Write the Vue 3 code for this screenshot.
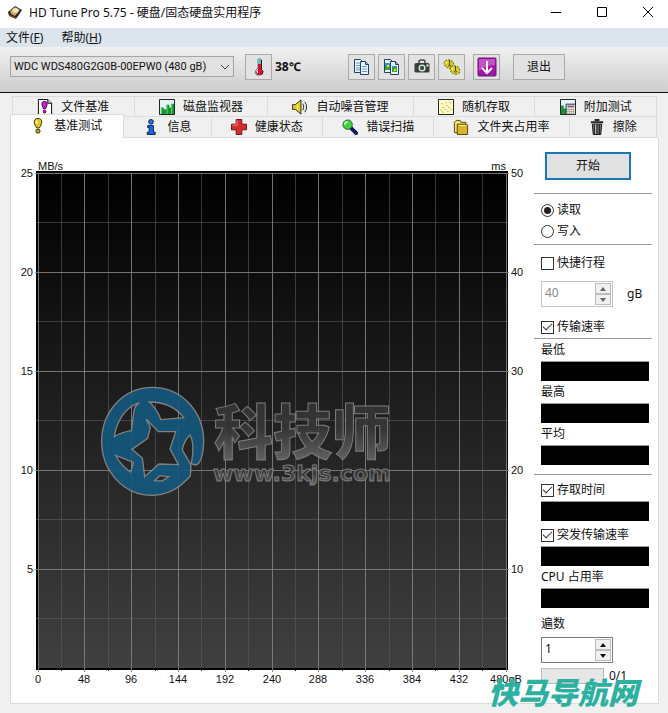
<script setup>
import { ref } from 'vue'

const drive = ref('WDC WDS480G2G0B-00EPW0 (480 gB)')
const mode = ref('read')
const shortStroke = ref(false)
const strokeSize = ref(40)
const transfer = ref(true)
const access = ref(true)
const burst = ref(true)
const passes = ref(1)

const backTabs = [
  { label: '文件基准', icon: 'filebench' },
  { label: '磁盘监视器', icon: 'monitor' },
  { label: '自动噪音管理', icon: 'sound' },
  { label: '随机存取', icon: 'random' },
  { label: '附加测试', icon: 'extra' },
]
const frontTabs = [
  { label: '基准测试', icon: 'bench', active: true },
  { label: '信息', icon: 'info' },
  { label: '健康状态', icon: 'health' },
  { label: '错误扫描', icon: 'scan' },
  { label: '文件夹占用率', icon: 'folder' },
  { label: '擦除', icon: 'erase' },
]
const tabRows = [backTabs, frontTabs]

const left = 38
const top = 173
const stepX = 46.8
const stepY = 99
const xTicks = Array.from({ length: 11 }, (_, i) => ({
  x: Math.floor(left + i * stepX),
  label: i === 10 ? '480gB' : String(i * 48),
}))
const xMinor = Array.from({ length: 10 }, (_, i) => Math.floor(left + (i + 0.5) * stepX))
const yTicks = Array.from({ length: 5 }, (_, i) => ({
  y: top + i * stepY,
  speed: 25 - i * 5,
  ms: 50 - i * 10,
}))
const yMinor = Array.from({ length: 5 }, (_, i) => Math.floor(top + (i + 0.5) * stepY))
</script>

<template>
  <div class="window">
    <header class="titlebar">
      <svg class="app-icon" viewBox="0 0 16 16" aria-hidden="true">
        <path d="M1 7 8 1l7 4-6 9-7-3z" fill="#2b211b" />
        <path d="M3 6 8 2l5 3-5 6-4-2z" fill="#c9a36b" />
        <ellipse cx="8.500" cy="5.500" rx="3" ry="2.500" fill="#f2dfb8" />
        <path d="m2 10 7 3 2-2" stroke="#8d5d3b" fill="none" />
      </svg>
      <h1>HD Tune Pro 5.75 - 硬盘/固态硬盘实用程序</h1>
      <div class="controls">
        <button aria-label="最小化"><svg viewBox="0 0 12 12"><path d="M1 5.500h10" /></svg></button>
        <button aria-label="最大化"><svg viewBox="0 0 12 12"><path d="M1.500.5h9v9h-9z" /></svg></button>
        <button aria-label="关闭"><svg viewBox="0 0 12 12"><path d="m1 0 10 10M11 0 1 10" /></svg></button>
      </div>
    </header>

    <nav class="menu">
      <a href="#file">文件(<u>F</u>)</a>
      <a href="#help">帮助(<u>H</u>)</a>
    </nav>

    <div class="toolbar">
      <div class="drive">
        <select v-model="drive" aria-label="硬盘">
          <option>WDC WDS480G2G0B-00EPW0 (480 gB)</option>
        </select>
        <svg class="chevron" viewBox="0 0 10 6" aria-hidden="true"><path d="m1 1 4 4 4-4" /></svg>
      </div>
      <button class="tool" aria-label="温度">
        <svg viewBox="0 0 20 20">
          <path d="M9 2h3v10l2 3-2 3H8l-2-2 1-3 2-2z" fill="#e8e8e8" stroke="#777" />
          <path d="M9 2h3v5H9z" fill="#5ac5b9" />
          <path d="M9 7h3v6l2 2-2 3H8l-1-3 2-2z" fill="#d1122a" />
          <path d="M12.500 3v9.500l1.500 2-1 3" fill="none" stroke="#400" />
          <path d="M8.500 14v2" stroke="#fff" />
        </svg>
      </button>
      <output class="temp">38℃</output>
      <div class="tools">
        <button class="tool" aria-label="复制文本">
          <svg viewBox="0 0 20 20">
            <path d="M2.500 2.500h6l2 2v11h-8z" fill="#eef6ff" stroke="#24415f" />
            <path d="M8.500 4.500h5l3 3v10h-8z" fill="#eef6ff" stroke="#24415f" />
            <path d="M13.500 4.500v3h3" fill="#9bbce0" stroke="#24415f" />
            <path d="M4 6h4M4 8.500h4M4 11h4M4 13h4M10 9.500h5M10 12h5M10 14.500h5" stroke="#5799de" />
          </svg>
        </button>
        <button class="tool" aria-label="复制图像">
          <svg viewBox="0 0 20 20">
            <path d="M2.500 2.500h6l2 2v11h-8z" fill="#eef6ff" stroke="#24415f" />
            <path d="M8.500 4.500h5l3 3v10h-8z" fill="#eef6ff" stroke="#24415f" />
            <path d="M13.500 4.500v3h3" fill="#9bbce0" stroke="#24415f" />
            <path d="M3 6h5v7H3zM10 9h5v6h-5z" fill="#3a8de0" />
            <path d="M3 9h5v4H3zM10 11l3-1 2 2v3h-5z" fill="#35a827" />
            <path d="M5 8h2v2H5zM12 12h2v2h-2z" fill="#d7e34a" />
          </svg>
        </button>
        <button class="tool" aria-label="截图">
          <svg viewBox="0 0 20 20">
            <path d="M7 6V5q0-2 2-2h2q2 0 2 2v1" fill="none" stroke="#444" stroke-width="1.500" />
            <rect x="2.500" y="6" width="15" height="9.500" rx="1.500" fill="#3c3c3c" />
            <circle cx="10" cy="11" r="3.500" fill="#dfeee3" />
            <circle cx="10" cy="11" r="2.200" fill="#2f5441" />
            <path d="M14.500 7.500h2v2h-2z" fill="#dff5df" />
          </svg>
        </button>
        <button class="tool" aria-label="选项">
          <svg viewBox="0 0 20 20">
            <g fill="#d6cb24" stroke="#77700c" stroke-dasharray="2 1">
              <ellipse cx="7" cy="7" rx="5" ry="4" transform="rotate(25 7 7)" />
              <ellipse cx="13" cy="13" rx="5" ry="4" transform="rotate(25 13 13)" />
            </g>
            <path d="M7.500 3v5M13.500 9v5" stroke="#4f4a08" />
            <path d="M6 8.500q1.500 1 3 0M12 14.500q1.500 1 3 0" fill="none" stroke="#4f4a08" />
            <path d="m4 6 1-1M10 12l1-1" stroke="#f9f4a0" stroke-width="2" />
          </svg>
        </button>
      </div>
      <button class="tool save" aria-label="保存">
        <svg viewBox="0 0 20 20">
          <rect x="1" y="1" width="18" height="18" rx="1" fill="#a014a8" stroke="#6d1478" />
          <path d="M2 2h16v6Q8 8 2 14z" fill="#c552c9" />
          <path d="M10 4v12M5 11l5 5 5-5" fill="none" stroke="#fff" stroke-width="2" />
        </svg>
      </button>
      <button class="exit">退出</button>
    </div>

    <main class="body">
      <div class="tabs" role="tablist">
        <div v-for="(row, r) in tabRows" :key="r" class="tab-row" :class="{ front: r === 1 }">
          <button
            v-for="tab in row"
            :key="tab.label"
            class="tab"
            :class="{ active: tab.active }"
            role="tab"
            :aria-selected="!!tab.active"
          >
            <svg viewBox="0 0 17 17" aria-hidden="true">
              <g v-if="tab.icon === 'filebench'">
                <path d="M1.500.5h10l4 4v12h-14z" fill="#fff" stroke="#000" />
                <path d="M11.500.5v4h4" fill="#ddd" stroke="#000" />
                <path d="M8 2.500C4.500 2.500 4.500 6 7 10.500h2c2.500-4.500 2.500-8-1-8z" fill="#c41bd0" stroke="#400045" />
                <circle cx="8" cy="13.500" r="1.500" fill="#c41bd0" stroke="#400045" />
              </g>
              <g v-else-if="tab.icon === 'monitor'">
                <path d="M.5.5h16v16H.5z" fill="#e4f4fb" stroke="#111" />
                <path d="M2 9h3v7H2zM5 11h3v5H5zM8 6h3v10H8zM11 9h2v7h-2zM13 5h3v11h-3z" fill="#149438" />
                <path d="M2 9h1v7H2zM8 6h1v10H8zM13 5h1v11h-1z" fill="#6ddb57" />
              </g>
              <g v-else-if="tab.icon === 'sound'">
                <path d="M.5 6h3l6-5v15l-6-5h-3z" fill="#ded019" stroke="#222" />
                <path d="M6 5v7" stroke="#fff58a" />
                <path d="M11.500 5q2 3.500 0 7M13.500 3q4 5.500 0 11" fill="none" stroke="#222" />
              </g>
              <g v-else-if="tab.icon === 'random'">
                <path d="M.5.5h16v16H.5z" fill="#fffcc4" stroke="#111" />
                <path d="M3 12h1M5 9h1M7 11h1M9 7h1M11 9h1M13 4h1M5 14h1M10 13h1M13 11h1M4 5h1M8 4h1" stroke="#a26a16" />
              </g>
              <g v-else-if="tab.icon === 'extra'">
                <path d="M.5.5h16v16H.5z" fill="#e4f4fb" stroke="#111" />
                <path d="M1 7h3v9H1zM4 10h3v6H4z" fill="#149438" />
                <path d="M6.500 5.500h10v11h-10z" fill="#f4f0df" stroke="#222" />
                <path d="M8 7h7v2H8z" fill="#8753a1" />
                <path d="M8 11h7M8 13h7M8 15h7" stroke="#333" stroke-dasharray="1 1" />
              </g>
              <g v-else-if="tab.icon === 'bench'">
                <path d="M8.500.5C3 .5 4 6 7 10.500h3C13 6 14 .5 8.500.5z" fill="#dfcb22" stroke="#332e08" />
                <path d="M7 3v3" stroke="#fffab8" stroke-width="2" />
                <circle cx="8.500" cy="14" r="2.200" fill="#bda91a" stroke="#332e08" />
              </g>
              <g v-else-if="tab.icon === 'info'">
                <circle cx="8.500" cy="3" r="2.500" fill="#2475e6" stroke="#071c55" />
                <path d="M5 7h6v7h2v2.500H4.500V14h2V9H5z" fill="#1767de" stroke="#071c55" />
              </g>
              <g v-else-if="tab.icon === 'health'">
                <path d="M5.500.5h6v5h5v6h-5v5h-6v-5h-5v-6h5z" fill="#d72c2c" stroke="#681010" />
                <path d="M6.500 1.500v5h-5" fill="none" stroke="#f38b80" />
              </g>
              <g v-else-if="tab.icon === 'scan'">
                <path d="m9 9 6 6" stroke="#101060" stroke-width="4" stroke-linecap="round" />
                <circle cx="6" cy="6" r="5" fill="#42cf40" stroke="#176c20" />
                <path d="M3 6q0-3 3-3" fill="none" stroke="#c5ffc0" stroke-width="2" />
              </g>
              <g v-else-if="tab.icon === 'folder'">
                <path d="M1.500 14.500v-11l2-2h4l1 2h5v11z" fill="#f7e26d" stroke="#524004" />
                <path d="M4.500 5.500h10l1 1v10h-11z" fill="#d8b52a" stroke="#524004" />
                <path d="M6 7h8" stroke="#fff3a5" />
              </g>
              <g v-else>
                <path d="M6 1h5M2 3.500h13" stroke="#222" stroke-width="2" />
                <path d="M3.500 5.500h10l-1 11h-8z" fill="#777" stroke="#111" />
                <path d="M6 6v10M8.500 6v10M11 6v10" stroke="#111" />
                <path d="M7 6v10" stroke="#ccc" />
              </g>
            </svg>
            <span>{{ tab.label }}</span>
          </button>
        </div>
      </div>

      <section class="panel">
        <svg class="chart" viewBox="11 138 523 565" role="img" aria-label="MB/s">
          <defs>
            <linearGradient id="plot" x1="0" y1="0" x2="0" y2="1">
              <stop offset="0" stop-color="#000" />
              <stop offset="1" stop-color="#404040" />
            </linearGradient>
            <linearGradient id="mark" x1="0" y1="0" x2="0" y2="1">
              <stop offset="0" stop-color="#333" />
              <stop offset=".5" stop-color="#383838" />
              <stop offset="1" stop-color="#777" />
            </linearGradient>
          </defs>
          <rect x="36" y="171" width="472" height="499" fill="#000" />
          <rect x="39" y="173" width="468" height="495" fill="url(#plot)" />
          <g class="minor">
            <path v-for="x in xMinor" :key="'x' + x" :d="`M${x + 0.5} 173V668`" />
            <path v-for="y in yMinor" :key="'y' + y" :d="`M36 ${y + 0.5}H508`" />
          </g>
          <g class="major">
            <path v-for="t in xTicks" :key="t.label" :d="`M${t.x + 0.5} 173V672`" />
            <path v-for="t in yTicks" :key="t.y" :d="`M35 ${t.y + 0.5}H509`" />
          </g>
          <path v-for="x in xMinor" :key="'t' + x" :d="`M${x + 0.5} 670v1`" stroke="#222" />
          <g class="axis">
            <text x="38" y="170">MB/s</text>
            <text x="506" y="170" text-anchor="end">ms</text>
            <text v-for="t in yTicks" :key="'l' + t.y" x="33" :y="t.y + 4" text-anchor="end">{{ t.speed }}</text>
            <text v-for="t in yTicks" :key="'r' + t.y" x="511" :y="t.y + 4">{{ t.ms }}</text>
            <text v-for="t in xTicks" :key="'b' + t.x" :x="t.x" y="683" text-anchor="middle">{{ t.label }}</text>
          </g>
          <g class="brand">
            <g transform="translate(90 370) scale(.33333)">
              <path
                fill-rule="evenodd"
                d="M187 52C275 52 341 125 341 214C341 240 334 268 326 280Q316 290 304 280C310 250 312 215 300 195Q280 215 277 240L303 285L301 318Q290 330 272 346C245 368 215 376 187 376C100 376 35 302 35 214C35 125 100 52 187 52Z
                M73 200C79 155 105 112 148 98Q134 108 132 122L124 182Q95 186 73 200Z
                M178 96C220 96 258 112 281 143L213 149Q200 115 178 96Z
                M168 147L205 185L257 185L240 237L265 284L207 282L164 320L157 264L126 238L173 205L181 172Z
                M77 256L130 277L122 306Q91 286 77 256Z
                M194 332L209 317L236 320L216 333Z"
              />
            </g>
            <text class="brand-name" x="214" y="454">科技师</text>
            <text class="brand-url" x="213" y="481">www.3kjs.com</text>
          </g>
        </svg>

        <form class="side" @submit.prevent>
          <button class="start">开始</button>
          <hr class="rule after-start" />
          <div class="radios">
            <label class="check"><input v-model="mode" type="radio" name="mode" value="read" />读取</label>
            <label class="check"><input v-model="mode" type="radio" name="mode" value="write" />写入</label>
          </div>
          <hr class="rule" />
          <label class="check stroke"><input v-model="shortStroke" type="checkbox" />快捷行程</label>
          <div class="line">
            <div class="spin disabled">
              <input id="size" v-model="strokeSize" type="number" disabled />
              <div class="arrows">
                <button type="button" disabled aria-label="增加"><svg viewBox="0 0 6 4"><path d="M0 4h6L3 0z" /></svg></button>
                <button type="button" disabled aria-label="减少"><svg viewBox="0 0 6 4"><path d="M0 0h6L3 4z" /></svg></button>
              </div>
            </div>
            <label class="unit" for="size">gB</label>
          </div>
          <label class="check transfer"><input v-model="transfer" type="checkbox" />传输速率</label>
          <hr class="rule" />
          <div class="readout"><span>最低</span><output></output></div>
          <div class="readout"><span>最高</span><output></output></div>
          <div class="readout"><span>平均</span><output></output></div>
          <hr class="rule after-average" />
          <div class="readout spaced"><label class="check"><input v-model="access" type="checkbox" />存取时间</label><output></output></div>
          <div class="readout spaced"><label class="check"><input v-model="burst" type="checkbox" />突发传输速率</label><output></output></div>
          <div class="readout"><span>CPU 占用率</span><output></output></div>
          <label class="passes" for="passes">遍数</label>
          <div class="spin">
            <input id="passes" v-model="passes" type="number" />
            <div class="arrows">
              <button type="button" aria-label="增加" @click="passes++"><svg viewBox="0 0 6 4"><path d="M0 4h6L3 0z" /></svg></button>
              <button type="button" aria-label="减少" @click="passes--"><svg viewBox="0 0 6 4"><path d="M0 0h6L3 4z" /></svg></button>
            </div>
          </div>
          <div class="line run">
            <progress value="0" max="1" aria-label="进度"></progress>
            <span>0/1</span>
          </div>
        </form>
      </section>
    </main>
    <div class="stamp">快马导航网</div>
  </div>
</template>

<style>
body {
  margin: 0;
}
</style>

<style scoped>
.window {
  position: relative;
  box-sizing: border-box;
  min-height: 100vh;
  display: flex;
  flex-direction: column;
  background: #f0f0f0;
  color: #111;
  font: 12px/18px "Noto Sans", "Noto Sans CJK SC", sans-serif;
}
.window *,
.window *::before {
  box-sizing: border-box;
}
button,
input,
select {
  margin: 0;
  padding: 0;
  font: inherit;
  color: inherit;
}
.titlebar {
  display: flex;
  align-items: center;
  height: 28px;
  padding-left: 7px;
  padding-bottom: 2px;
  background: #fff;
}
.app-icon {
  width: 16px;
  height: 16px;
  margin-right: 6px;
}
h1 {
  flex: 1;
  margin: 0;
  font-size: 12px;
  font-weight: 400;
}
.controls {
  display: flex;
  gap: 6px;
}
.controls button {
  display: grid;
  place-items: center;
  width: 40px;
  height: 24px;
  border: 0;
  background: none;
}
.controls svg {
  width: 12px;
  height: 12px;
  fill: none;
  stroke: #000;
}
.menu {
  display: flex;
  align-items: end;
  gap: 18px;
  height: 19px;
  padding-left: 6px;
  background: #dce4ed;
}
.menu a {
  color: inherit;
  text-decoration: none;
}
.toolbar {
  display: flex;
  align-items: center;
  height: 46px;
  padding: 0 10px 6px;
  border-bottom: 1px solid #111;
  background: linear-gradient(#f1f1f1, #cdcdcd);
}
.drive {
  position: relative;
  width: 224px;
  margin-right: 11px;
}
.drive select {
  display: block;
  width: 100%;
  height: 21px;
  padding: 0 20px 0 3px;
  appearance: none;
  border: 1px solid #a5a5a5;
  border-radius: 0;
  background: #e1e1e1;
  font-family: Roboto, sans-serif;
  font-size: 11px;
}
.chevron {
  position: absolute;
  right: 4px;
  top: 8px;
  width: 10px;
  height: 6px;
  fill: none;
  stroke: #444;
  pointer-events: none;
}
.tool,
.exit {
  display: grid;
  place-items: center;
  height: 26px;
  border: 1px solid #a9a9a9;
  background: #e2e2e2;
}
.tool {
  width: 27px;
}
.tool svg {
  width: 20px;
  height: 20px;
}
.temp {
  width: 76px;
  padding-left: 3px;
  font-weight: 700;
}
.tools {
  display: flex;
  gap: 3px;
}
.save {
  margin-left: 8px;
}
.exit {
  width: 52px;
  margin-left: 13px;
}
.body {
  flex: 1;
  display: flex;
  flex-direction: column;
  padding: 3px 9px 9px 10px;
}
.tab-row {
  display: flex;
  height: 20px;
  padding: 0 2px;
}
.tab-row.front {
  height: 21px;
  padding-left: 0;
}
.tab {
  flex: 1 1 auto;
  display: flex;
  align-items: center;
  justify-content: center;
  gap: 8px;
  border: 1px solid #dcdcdc;
  border-width: 1px 1px 0 0;
  background: #f0f0f0;
  white-space: nowrap;
}
.tab:first-child {
  border-left-width: 1px;
}
.tab svg {
  width: 16px;
  height: 16px;
}
.tab.active {
  height: 24px;
  margin-top: -2px;
  padding: 0 2px 2px 0;
  background: #fff;
  z-index: 1;
}
.panel {
  flex: 1;
  display: grid;
  grid-template-columns: minmax(0, 1fr) 124px;
  align-items: start;
  border: 1px solid #dcdcdc;
  background: #fff;
}
.chart {
  display: block;
  width: 100%;
}
.minor {
  stroke: #5c5c5c;
  stroke-opacity: 0.6;
}
.major {
  stroke: #808080;
  stroke-opacity: 0.9;
}
.axis {
  font: 11px "Liberation Sans", sans-serif;
  fill: #111;
}
.brand {
  opacity: 0.9;
}
.brand path {
  fill: #14597f;
  stroke: #8b8b8b;
  stroke-width: 4;
}
.brand text {
  fill: url(#mark);
  stroke: #858585;
  stroke-width: 1;
}
.brand-name {
  font: 900 59px "Noto Sans CJK SC", sans-serif;
}
.brand-url {
  font: 700 22px "DejaVu Sans", sans-serif;
}
.side {
  display: flex;
  flex-direction: column;
  align-items: flex-start;
  padding: 14px 6px 16px 7px;
}
.start {
  width: 86px;
  height: 28px;
  margin-left: 4px;
  border: 2px solid #1678b4;
  background: #e1e1e1;
}
.rule {
  width: 118px;
  margin: 0 0 0 -7px;
  border: 0;
  border-top: 1px solid #989898;
}
.after-start {
  margin-top: 13px;
}
.after-average {
  margin-top: 9px;
  margin-bottom: 1px;
}
.radios {
  display: grid;
  gap: 3px;
  padding: 7px 0 4px;
}
.check {
  display: flex;
  align-items: center;
  gap: 3px;
  height: 18px;
  white-space: nowrap;
}
.check input {
  display: grid;
  place-items: center;
  width: 13px;
  height: 13px;
  appearance: none;
  border: 1px solid #333;
  background: #fff;
}
.check input[type="radio"] {
  border-radius: 50%;
}
.check input[type="radio"]:checked::before {
  content: "";
  width: 7px;
  height: 7px;
  border-radius: 50%;
  background: #222;
}
.check input[type="checkbox"]:checked::before {
  content: "";
  width: 9px;
  height: 5px;
  margin-bottom: 3px;
  border: solid #333;
  border-width: 0 0 1px 1px;
  transform: rotate(-45deg);
}
.stroke {
  margin: 9px 0;
}
.line {
  display: flex;
  align-items: center;
}
.unit {
  margin-left: 14px;
}
.spin {
  display: flex;
  width: 72px;
  height: 26px;
  padding: 1px;
  border: 1px solid #7a7a7a;
  background: #fff;
}
.spin input {
  flex: 1;
  min-width: 0;
  padding: 0 2px 2px;
  appearance: textfield;
  border: 0;
  background: none;
}
.spin.disabled {
  border-color: #c4c4c4;
  color: #888;
}
.arrows {
  display: grid;
  width: 16px;
}
.arrows button {
  display: grid;
  place-items: center;
  border: 1px solid #bdbdbd;
  background: #f0f0f0;
}
.arrows svg {
  width: 6px;
  height: 4px;
  fill: #111;
}
.disabled .arrows svg {
  fill: #666;
}
.transfer {
  margin-top: 11px;
  margin-bottom: 2px;
}
.readout {
  display: grid;
  grid-template-rows: 18px 20px;
  gap: 2px;
  width: 108px;
  margin-top: 2px;
}
.readout output {
  border-top: 1px solid #999;
  background: #000;
}
.readout.spaced {
  margin-top: 5px;
}
.passes {
  margin: 7px 0 4px;
}
.run {
  gap: 5px;
  margin-top: 4px;
}
progress {
  width: 63px;
  height: 16px;
  appearance: none;
  border: 1px solid #bcbcbc;
  background: #e6e6e6;
}
progress::-webkit-progress-bar {
  background: #e6e6e6;
}
.stamp {
  position: absolute;
  right: 30px;
  bottom: 6px;
  color: #2cb09f;
  font: italic 900 30px/32px "Noto Sans CJK SC", sans-serif;
  pointer-events: none;
}
</style>
